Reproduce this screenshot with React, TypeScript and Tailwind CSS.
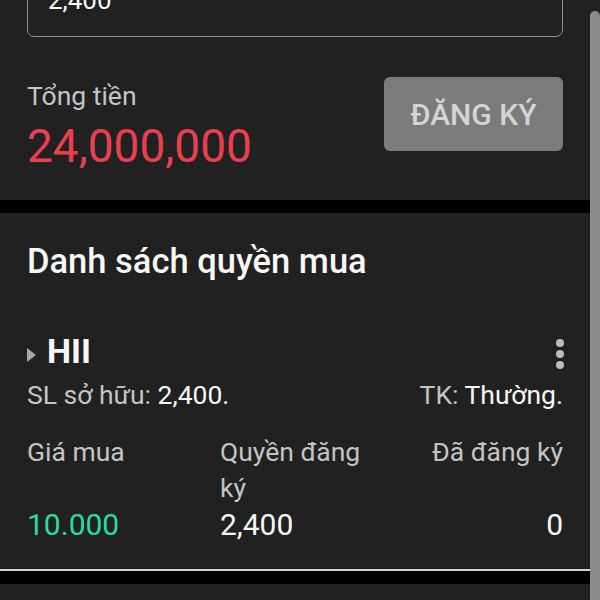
const rows = [
  { label: "Giá mua", value: "10.000", tone: "text-[#2bdc9d]" },
  { label: "Quyền đăng ký", value: "2,400", tone: "text-[#f7f7f7]" },
  { label: "Đã đăng ký", value: "0", tone: "text-[#f7f7f7]" },
]

const Kebab = () => (
  <div className="flex flex-col items-center gap-[3px]">
    <span className="h-[8px] w-[8px] rounded-full bg-[#bdbdbd]" />
    <span className="h-[8px] w-[8px] rounded-full bg-[#bdbdbd]" />
    <span className="h-[8px] w-[8px] rounded-full bg-[#bdbdbd]" />
  </div>
)

export default function App() {
  return (
    <div className="flex h-[600px] w-[600px] overflow-hidden bg-[#212121] font-['Roboto','Noto_Sans',sans-serif]">
      <div className="flex w-[590px] flex-col">
        {/* Nhập khối lượng + tổng tiền */}
        <section className="px-[27px] pb-[27px]">
          <div className="-mt-[37px] flex h-[74px] items-center rounded-[7px] border-[1.5px] border-[#8e8e8e] px-[20px]">
            <span className="text-[26px] leading-[30px] text-[#f7f7f7]">2,400</span>
          </div>
          <div className="mt-[40px] flex items-start justify-between">
            <div className="mt-[4px] flex flex-col">
              <span className="text-[26.5px] leading-[30px] text-[#c4c4c4]">Tổng tiền</span>
              <span className="mt-[8px] text-[46px] leading-[54px] text-[#e8404e]">24,000,000</span>
            </div>
            <button className="flex h-[74px] w-[179px] items-center justify-center rounded-[6px] bg-[#7b7b7b] text-[30px] font-medium text-[#d4d4d4]">
              ĐĂNG KÝ
            </button>
          </div>
        </section>

        <div className="h-[13px] bg-black" />

        {/* Danh sách quyền mua */}
        <section className="border-b-2 border-[#d4d4d4] px-[27px] pb-[26px] pt-[28px]">
          <h2 className="text-[34.5px] font-medium leading-[40px] text-[#f7f7f7]">Danh sách quyền mua</h2>

          <div className="mt-[50px] flex items-center justify-between">
            <div className="flex items-center">
              <span className="mt-[8px] h-0 w-0 border-y-[7.5px] border-l-[9px] border-y-transparent border-l-[#a8a8a8]" />
              <span className="ml-[11px] text-[34px] font-bold leading-[40px] text-[#f7f7f7]">HII</span>
            </div>
            <div className="mr-[-1px] mt-[6px]">
              <Kebab />
            </div>
          </div>

          <div className="mt-[9px] flex justify-between text-[26.5px] leading-[30px]">
            <span className="text-[#c4c4c4]">
              SL sở hữu: <span className="text-[#f7f7f7]">2,400.</span>
            </span>
            <span className="text-[#c4c4c4]">
              TK: <span className="text-[#f7f7f7]">Thường.</span>
            </span>
          </div>

          <div className="mt-[24px] flex">
            {rows.map((row, i) => (
              <div
                key={row.label}
                className={
                  i === 0
                    ? "flex w-[193px] flex-col"
                    : i === 1
                      ? "flex w-[160px] flex-col"
                      : "flex flex-1 flex-col items-end text-right"
                }
              >
                <span className="h-[72px] text-[26.5px] leading-[36px] text-[#c4c4c4]">{row.label}</span>
                <span className={`mt-[1px] text-[30px] leading-[36px] ${row.tone}`}>{row.value}</span>
              </div>
            ))}
          </div>
        </section>

        <div className="h-[13px] bg-black" />
      </div>

      {/* thanh cuộn */}
      <div className="flex w-[10px] flex-col pt-[11px]">
        <div className="flex-1 rounded-t-full bg-[#8c8c8c]" />
      </div>
    </div>
  )
}
